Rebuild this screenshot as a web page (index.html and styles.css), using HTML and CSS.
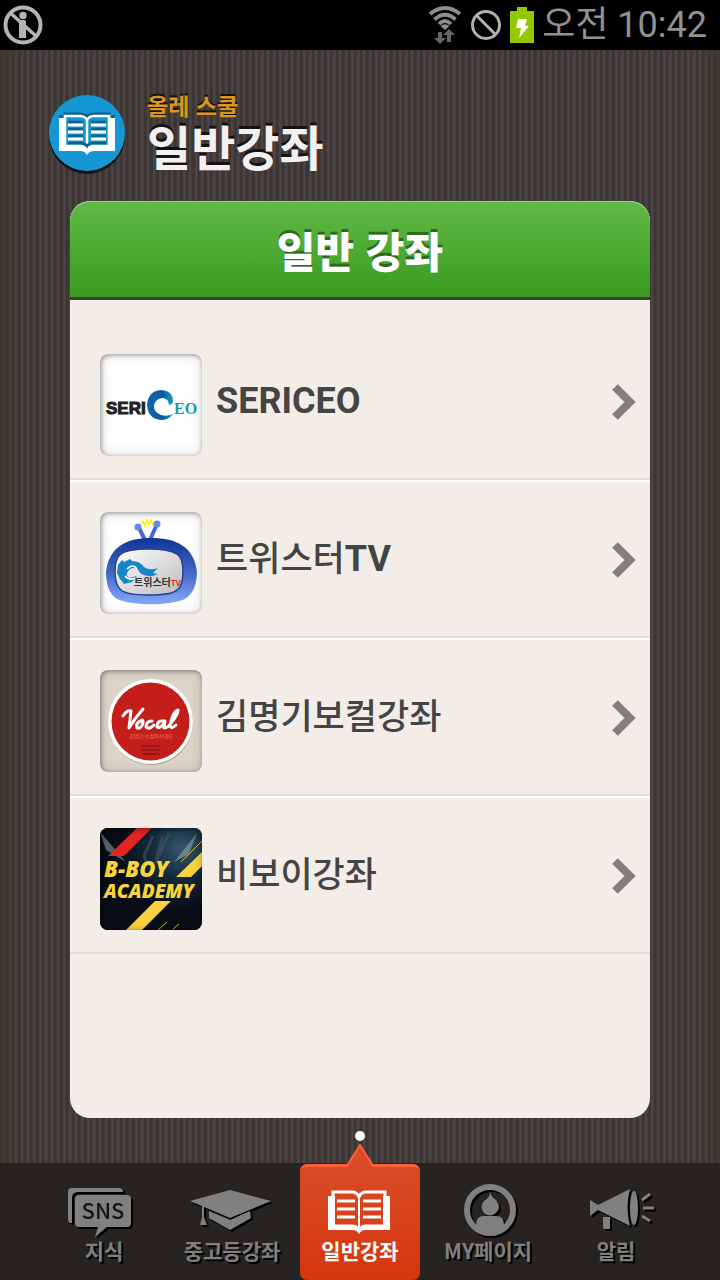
FILE: index.html
```html
<!DOCTYPE html>
<html lang="ko">
<head>
<meta charset="utf-8">
<meta name="viewport" content="width=device-width, initial-scale=1">
<title>올레 스쿨 일반강좌</title>
<link rel="stylesheet" href="styles.css">
</head>
<body>
<div class="statusbar">
  <svg class="status-info" viewBox="0 0 40 40" width="40" height="40" aria-hidden="true">
    <g fill="none" stroke="#b4b4b4"><circle cx="20" cy="20" r="17.500" stroke-width="4"/><path d="M8 8.500 34 32" stroke-width="3.500"/></g>
    <g fill="#b4b4b4"><circle cx="20" cy="10.500" r="3.700"/><path d="M16 17q0-2 2-2h3q2 0 2 2v16h-7z"/></g>
  </svg>
  <div class="status-right">
    <svg viewBox="0 0 34 38" width="34" height="38" aria-hidden="true">
      <g fill="none" stroke="#8d8d8d" stroke-width="3.800"><path d="M2 8Q17-4 32 8"/><path d="M6.500 13.500Q17 4 27.500 13.500"/><path d="M11 18Q17 12 23 18"/></g>
      <path d="M12.500 20q4.500-3.500 9 0L17 24z" fill="#8d8d8d"/>
      <g fill="#666"><path d="M10 26h4v6h4l-6 6-6-6h4z"/><path d="M19 36v-7h-4l6-6 6 6h-4v7z"/></g>
    </svg>
    <svg viewBox="0 0 32 32" width="32" height="32" aria-hidden="true"><g fill="none" stroke="#b0b0b0" stroke-width="3"><circle cx="16" cy="16" r="13.500"/><path d="M6.500 6.500l19 19"/></g></svg>
    <svg viewBox="0 0 24 36" width="24" height="36" aria-hidden="true"><path d="M7 0h10v4h7v32H0V4h7z" fill="#91c800"/><path d="M8 12h9l-2 7h4L9 31l2-10H6z" fill="#fff"/></svg>
    <time class="clock" datetime="10:42">오전 10:42</time>
  </div>
</div>

<header class="brand">
  <div class="brand-mark">
    <svg viewBox="0 0 60 46" width="60" height="46" aria-hidden="true">
      <g fill="none" stroke="#0b5f88" stroke-width="3" transform="translate(0 -3)"><path d="M4 8v31h19q5 0 7 3 2-3 7-3h19V8"/><path d="M8 7h15q5 0 7 3 2-3 7-3h15v27H37q-5 0-7 3-2-3-7-3H8z"/></g>
      <path d="M2 8h6v27h15q5 0 7 3 2-3 7-3h15V8h6v33H37q-5 0-7 4-2-4-7-4H2z" fill="#fff"/>
      <path d="M8 6h15q5 0 7 4 2-4 7-4h15v30H37q-5 0-7 4-2-4-7-4H8z" fill="#1697d3"/>
      <path d="M8 6h15q5 0 7 4 2-4 7-4h15v30H37q-5 0-7 4-2-4-7-4H8zM30 10v29" fill="none" stroke="#fff" stroke-width="2.500"/>
      <path d="M11 12h15M11 19h15M11 26h15M34 12h15M34 19h15M34 26h15M11 33h14q4 1 5 3 1-2 5-3h14" fill="none" stroke="#0b5f88" stroke-width="2.500"/>
      <path d="M11 15h15M11 22h15M11 29h15M34 15h15M34 22h15M34 29h15" stroke="#fff" stroke-width="3"/>
    </svg>
  </div>
  <div class="brand-text">
    <p class="brand-sub">올레 스쿨</p>
    <h1 class="brand-title">일반강좌</h1>
  </div>
</header>

<main class="panel">
  <h2 class="panel-head">일반 강좌</h2>
  <ul class="list">
    <li><a class="row" href="#sericeo">
      <span class="thumb thumb-light">
        <svg viewBox="0 0 102 102" role="img" aria-label="SERICEO">
          <defs><linearGradient id="swirl" x1="0" y1="0" x2="1" y2="0"><stop offset="0" stop-color="#1268ad"/><stop offset=".6" stop-color="#075aa7"/><stop offset="1" stop-color="#20a0b8"/></linearGradient></defs>
          <text x="6" y="60" class="seri">SERI</text>
          <path d="M73 47q0-10-12-11-13 1-14 15 1 15 16 15 7-1 10-6-6 3-12 1-8-3-7-10 2-7 9-7 6 1 6 7 4-1 4-4z" fill="url(#swirl)"/>
          <text x="74" y="60" class="ceo">EO</text>
        </svg>
      </span>
      <span class="name"><b>SERICEO</b></span>
      <svg class="chevron" viewBox="0 0 24 36" width="24" height="36" aria-hidden="true"><path d="M3 3l15 15L3 33" fill="none" stroke="#808080" stroke-width="8"/></svg>
    </a></li>
    <li><a class="row" href="#twister">
      <span class="thumb thumb-light">
        <svg viewBox="0 0 102 102" role="img" aria-label="트위스터TV">
          <defs><linearGradient id="tv" x1="0" y1="0" x2="0" y2="1"><stop offset="0" stop-color="#0c3598"/><stop offset=".5" stop-color="#4365c4"/><stop offset="1" stop-color="#84a9fa"/></linearGradient><linearGradient id="screen" x1="0" y1="0" x2="1" y2="1"><stop offset="0" stop-color="#fff"/><stop offset="1" stop-color="#bbb"/></linearGradient></defs>
          <path d="M38 14l7 14M57 12l-7 16" stroke="#4467ca" stroke-width="4"/>
          <path d="M41 12l2-3 2 5 2-6 2 5 2-5 2 5 2-3" fill="none" stroke="#fff000" stroke-width="1.500"/>
          <circle cx="38" cy="15" r="3.500" fill="#6788df"/><circle cx="57" cy="12" r="3.500" fill="#6788df"/>
          <path d="M51 26c26 0 43 9 46 34 0 12-4 22-12 27-16 7-52 7-68 0C9 82 6 72 6 60 9 35 26 26 51 26z" fill="url(#tv)"/>
          <path d="M49 37c14 0 23 2 28 5q6 4 6 18 0 14-6 18-5 5-28 5-22 0-28-5-6-5-6-18 0-14 6-18 6-5 28-5z" fill="url(#screen)" stroke="#243f91" stroke-width="1.500"/>
          <path d="M18 53l4-5 2 2 6-3 2 2q8 0 12 6 6 4 14 1l-5 5 5 1q-10 5-18-1-3-7-10-4-6 5-1 9l8-2-5 6-8 2-4-5-3-6z" fill="#1685c9"/>
          <path d="M27 57q6-6 10 0M25 64q4 5 10 2" fill="none" stroke="#fff" stroke-width="1.500"/>
          <text x="34" y="74" class="tv-name">트위스터<tspan class="tv-red">TV</tspan></text>
        </svg>
      </span>
      <span class="name">트위스터<b>TV</b></span>
      <svg class="chevron" viewBox="0 0 24 36" width="24" height="36" aria-hidden="true"><path d="M3 3l15 15L3 33" fill="none" stroke="#808080" stroke-width="8"/></svg>
    </a></li>
    <li><a class="row" href="#vocal">
      <span class="thumb thumb-sand">
        <svg viewBox="0 0 102 102" role="img" aria-label="Vocal">
          <circle cx="51" cy="53" r="42" fill="#aaa195"/><circle cx="50.500" cy="51.500" r="42.500" fill="#fff"/><circle cx="50.500" cy="51.500" r="39" fill="#c41e1a"/>
          <g fill="none" stroke="#fff" stroke-width="3" stroke-linecap="round" stroke-linejoin="round" aria-hidden="true"><path d="M23 46q4-6 8-5l-2 17q6-10 14-19M42 50q-7 3-5 8 5 1 6-6 0-3-2-1M52 51q-6 0-6 6 3 3 8-2M64 51q-7-1-7 6 4 2 8-6l-1 7q4 0 7-5 7-8 7-13-5 1-8 15 1 5 6 0"/></g>
          <text x="51" y="68" class="vocal-sub">김명기 보컬아카데미</text>
          <path d="M42 76h18M42 80h18M42 84h18" stroke="#861613" stroke-width="1.500"/>
        </svg>
      </span>
      <span class="name">김명기보컬강좌</span>
      <svg class="chevron" viewBox="0 0 24 36" width="24" height="36" aria-hidden="true"><path d="M3 3l15 15L3 33" fill="none" stroke="#808080" stroke-width="8"/></svg>
    </a></li>
    <li><a class="row" href="#bboy">
      <span class="thumb thumb-dark">
        <svg viewBox="0 0 102 102" role="img" aria-label="B-BOY ACADEMY">
          <defs><radialGradient id="glow" cx=".8" cy=".2" r=".6"><stop offset="0" stop-color="#36566c"/><stop offset=".5" stop-color="#122a3b"/><stop offset="1" stop-color="#090d15"/></radialGradient></defs>
          <path d="M0 0h102v102H0z" fill="url(#glow)"/>
          <path d="M0 4l26 30L6 22zM97 5L74 34l15-8z" fill="#9db1c2" opacity=".5"/>
          <path d="M53 8l-9 20 4 10M69 5L56 35M63 8l-7 24" stroke="#465360" stroke-width="3" fill="none" opacity=".6"/>
          <path d="M37 0h15L24 28H8z" fill="#e22521"/>
          <path d="M102 24v14L91 49H76zM55 73h16L42 102H26z" fill="#f9d23f"/>
          <path d="M102 13L81 34M67 94l-9 8M79 96l-6 5" stroke="#d9b22d"/>
          <g class="bboy"><text x="4" y="49">B-BOY</text><text x="4" y="70" class="academy">ACADEMY</text></g>
        </svg>
      </span>
      <span class="name">비보이강좌</span>
      <svg class="chevron" viewBox="0 0 24 36" width="24" height="36" aria-hidden="true"><path d="M3 3l15 15L3 33" fill="none" stroke="#808080" stroke-width="8"/></svg>
    </a></li>
  </ul>
</main>

<div class="pager"><span class="pager-dot"></span></div>

<nav class="tabs">
  <a class="tab" href="#sns">
    <svg class="tab-icon" viewBox="0 0 84 54" width="84" height="54" aria-hidden="true">
      <path d="M9 40q-3 0-3-4V9q0-4 4-4h47q4 0 4 4H16q-6 0-6 6v25z" fill="#808080"/>
      <path d="M17 12h48q4 0 4 4v24q0 4-4 4H45L33 54l3-10H17q-4 0-4-4V16q0-4 4-4z" fill="#808080"/>
      <text x="41" y="36" class="sns">SNS</text>
    </svg>
    <span>지식</span>
  </a>
  <a class="tab" href="#school">
    <svg class="tab-icon" viewBox="0 0 84 54" width="84" height="54" aria-hidden="true">
      <path d="M0 18L40 7l41 11-41 17zM19 28l21 9 20-9 1 7-21 12-21-12zM12 22h2v12l3 8h-7l2-8z" fill="#808080"/>
    </svg>
    <span>중고등강좌</span>
  </a>
  <a class="tab tab-active" href="#general" aria-current="page">
    <svg class="tab-pointer" viewBox="0 0 26 24" width="26" height="24" aria-hidden="true"><path d="M0 24L13 0l13 24z" fill="#dc4b27"/><path d="M0 22L13 1l13 21" fill="none" stroke="#fb603b" stroke-width="2"/></svg>
    <svg class="tab-icon" viewBox="0 0 84 54" width="84" height="54" aria-hidden="true">
      <path d="M10 13h7v31h18q4 0 6 3 2-3 6-3h18V13h7v34H47q-4 0-6 4-2-4-6-4H10z" fill="#fff"/>
      <path d="M15 9h19q5 0 7 5 2-5 7-5h19v34H48q-5 0-7 4-2-4-7-4H15z" fill="none" stroke="#fff" stroke-width="3"/>
      <path d="M41 12v35" stroke="#fff" stroke-width="2"/><path d="M19 18h18M19 26h18M19 34h18M45 18h18M45 26h18M45 34h18" stroke="#fff" stroke-width="3"/>
    </svg>
    <span>일반강좌</span>
  </a>
  <a class="tab" href="#my">
    <svg class="tab-icon" viewBox="0 0 84 54" width="84" height="54" aria-hidden="true">
      <circle cx="44" cy="27" r="23" fill="none" stroke="#808080" stroke-width="6"/>
      <path d="M44 9q1 4 6 8 6 8 0 13-6 5-12 0-5-6 0-12 6-3 6-9zM30 42q0-9 8-9h12q8 0 8 9-14 14-28 0z" fill="#808080"/>
    </svg>
    <span>MY페이지</span>
  </a>
  <a class="tab" href="#alerts">
    <svg class="tab-icon" viewBox="0 0 84 54" width="84" height="54" aria-hidden="true">
      <path d="M16 17l8 5L56 6q-5 18 0 37L24 27l-8 6zM29 34h7v12h-5q-2 0-2-2z" fill="#808080"/>
      <ellipse cx="60" cy="25" rx="4" ry="17" fill="#808080"/>
      <path d="M68 17l8-6M69 25h11M68 33l8 5" stroke="#808080" stroke-width="3"/>
    </svg>
    <span>알림</span>
  </a>
</nav>
</body>
</html>
```
FILE: styles.css
```css
* {
  box-sizing: border-box;
}

body {
  margin: 0;
  min-height: 100vh;
  display: flex;
  flex-direction: column;
  font-family: Roboto, "Noto Sans CJK KR", sans-serif;
  background:
    linear-gradient(90deg, rgba(56, 54, 40, 0.7), transparent 20px, transparent calc(100% - 20px), rgba(56, 54, 40, 0.7)),
    repeating-linear-gradient(90deg, #423331 0 2px, #3c3837 2px 3px, #464646 3px 5px, #403f3f 5px 6px);
}

a {
  color: inherit;
  text-decoration: none;
}

svg {
  display: block;
  flex: none;
}

.statusbar {
  height: 50px;
  padding: 0 13px 0 3px;
  display: flex;
  align-items: center;
  justify-content: space-between;
  background: #000;
}

.status-right {
  display: flex;
  align-items: center;
  gap: 8px;
}

.clock {
  font-size: 36px;
  line-height: 48px;
  color: #919191;
}

.brand {
  height: 151px;
  padding: 45px 49px 0;
  display: flex;
  align-items: flex-start;
  gap: 22px;
}

.brand-mark {
  width: 76px;
  height: 76px;
  display: grid;
  place-items: center;
  border-radius: 50%;
  background: #1697d3;
  box-shadow: 0 3px #111;
}

.brand-text {
  font-family: "Noto Sans CJK KR", sans-serif;
  font-weight: 700;
}

.brand-sub {
  margin: 0;
  font-size: 23px;
  line-height: 20px;
  color: #dc961e;
  text-shadow: 0 -2px #111;
}

.brand-title {
  margin: 0;
  font-size: 48px;
  font-weight: 700;
  line-height: 60px;
  color: #f1f1f1;
  text-shadow: 0 -3px #151212;
}

.panel {
  flex: 1;
  margin: 0 70px;
  overflow: hidden;
  border-radius: 20px;
  background: #f2ede6;
}

.panel-head {
  margin: 0;
  height: 99px;
  border-top: 1px solid #a0d18e;
  border-bottom: 3px solid #3c3d38;
  font: 900 42px/96px "Noto Sans CJK KR", sans-serif;
  text-align: center;
  color: #fff;
  text-shadow: 0 -3px #2c6a1c;
  background: linear-gradient(#5fba46, #3b9a20);
  border-radius: 20px 20px 0 0;
}

.list {
  margin: 0;
  padding: 22px 0 0;
  list-style: none;
}

.row {
  display: flex;
  align-items: center;
  padding: 32px 14px 22px 30px;
  border-bottom: 2px solid #e1ded8;
}

.list li + li .row {
  border-top: 2px solid #fff;
  padding-top: 30px;
}

.thumb {
  position: relative;
  flex: none;
  width: 102px;
  height: 102px;
  overflow: hidden;
  border-radius: 8px;
}

.thumb::after {
  content: "";
  position: absolute;
  inset: 0;
  border-radius: 8px;
  box-shadow: inset 1px 1px 5px rgba(0, 0, 0, 0.4), inset 0 0 14px rgba(0, 0, 0, 0.12);
}

.thumb-light {
  background: #fff;
}

.thumb-sand {
  background: #ddd4c8;
}

.thumb-dark {
  background: #090d15;
}

.name {
  flex: 1;
  margin-left: 14px;
  padding-bottom: 7px;
  font-size: 35px;
  font-weight: 500;
  line-height: 48px;
  color: #444;
}

.name b {
  font-size: 36px;
  font-weight: 700;
}

.chevron {
  margin-bottom: 6px;
}

.seri {
  font: 900 17px "Liberation Sans", sans-serif;
  fill: #222;
  stroke: #222;
}

.ceo {
  font: 700 16px "Liberation Serif", serif;
  fill: #169da8;
}

.tv-name {
  font: 700 10px "Noto Sans CJK KR", sans-serif;
  fill: #333;
}

.tv-red {
  font-size: 8px;
  fill: #e02429;
}

.vocal-sub {
  font: 400 5px "Noto Sans CJK KR", sans-serif;
  text-anchor: middle;
  fill: #e97e6e;
}

.bboy {
  font: italic 900 22px "Open Sans", sans-serif;
  fill: #f9d43f;
}

.academy {
  font-size: 19px;
}

.pager {
  height: 45px;
  padding-top: 13px;
}

.pager-dot {
  display: block;
  width: 10px;
  height: 10px;
  margin: 0 auto;
  border-radius: 50%;
  background: #fff;
}

.tabs {
  display: grid;
  grid-template-columns: repeat(5, 1fr);
  padding: 1px 40px 0;
  background: #272320;
}

.tab {
  position: relative;
  height: 116px;
  margin: 0 4px;
  padding-top: 19px;
  display: flex;
  flex-direction: column;
  align-items: center;
  font: 700 21px/26px "Noto Sans CJK KR", sans-serif;
  white-space: nowrap;
  color: #808080;
  text-shadow: 2px 2px #000;
}

.tab-icon {
  filter: drop-shadow(2px 2px 0 #000);
}

.sns {
  font: 500 22px "Noto Sans CJK KR", sans-serif;
  text-anchor: middle;
  text-shadow: none;
  fill: #171513;
}

.tab-active {
  padding-top: 16px;
  border-top: 3px solid #fb603b;
  border-radius: 7px;
  color: #fff;
  text-shadow: none;
  background: linear-gradient(#d94b27, #d5360d);
}

.tab-active .tab-icon {
  filter: none;
}

.tab-pointer {
  position: absolute;
  left: 50%;
  bottom: 100%;
  margin: 0 0 -1px -13px;
}
```
